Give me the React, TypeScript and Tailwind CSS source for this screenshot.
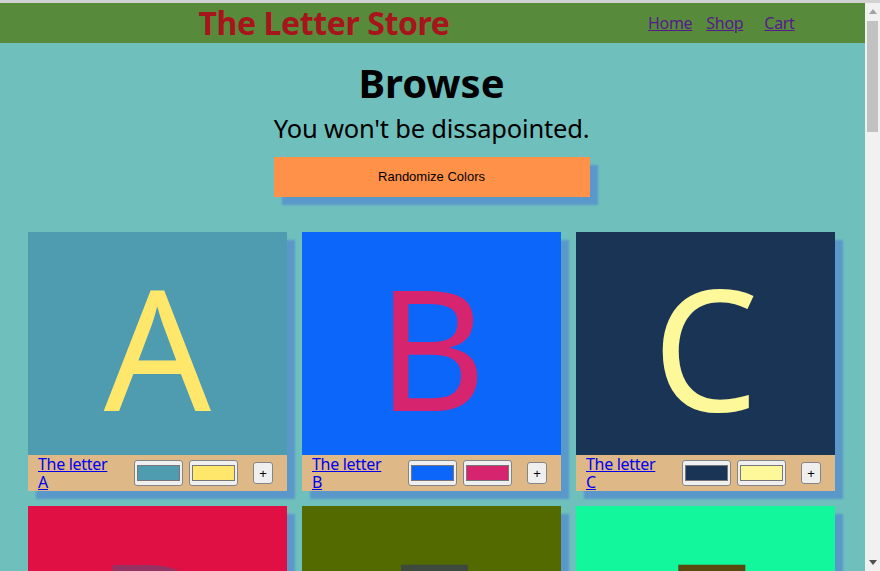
import React from "react";

type Card = { letter: string; bg: string; fg: string };

const cards: Card[] = [
  { letter: "A", bg: "#4f9bb0", fg: "#ffe76c" },
  { letter: "B", bg: "#0d66fa", fg: "#d6246e" },
  { letter: "C", bg: "#1a3456", fg: "#fdf99a" },
  { letter: "D", bg: "#e01045", fg: "#943363" },
  { letter: "E", bg: "#526a00", fg: "#3f4a3e" },
  { letter: "F", bg: "#12f79c", fg: "#5a4a10" },
];

function Swatch({ color }: { color: string }) {
  return (
    <div className="w-[49px] h-[26px] bg-[#efefef] border border-[#858585] rounded-[3px] px-[2px] py-[4px] flex">
      <div className="flex-1 border border-[#777777]" style={{ backgroundColor: color }} />
    </div>
  );
}

function LetterCard({ c }: { c: Card }) {
  return (
    <div className="flex flex-col w-[259px] shadow-[8px_8px_2px_#5b98ca]">
      <div
        className="h-[223px] flex items-center justify-center overflow-hidden"
        style={{ backgroundColor: c.bg }}
      >
        <span
          className="text-[168px] leading-[200px] font-['Noto_Sans',sans-serif] mt-[4px]"
          style={{ color: c.fg }}
        >
          {c.letter}
        </span>
      </div>
      <div className="h-[36px] bg-[#deb887] flex items-center pl-[10px]">
        <div className="w-[96px] flex">
          <a
            href="#"
            className="inline-block max-w-[78px] text-[16px] leading-[18px] text-[#0000ee] underline tracking-[-0.3px]"
          >
            The letter {c.letter}
          </a>
        </div>
        <div className="flex gap-[6px]">
          <Swatch color={c.bg} />
          <Swatch color={c.fg} />
        </div>
        <button className="ml-[15px] w-[20px] h-[22px] text-[13px] leading-none border border-[#858585] rounded-[3px] bg-[#efefef] text-black font-['Liberation_Sans',sans-serif]">
          +
        </button>
      </div>
    </div>
  );
}

function Scrollbar() {
  return (
    <div className="w-[15px] h-full bg-[#f1f1f1] flex flex-col items-center shrink-0">
      <div className="h-[17px] w-full flex items-center justify-center">
        <svg width="8" height="5" viewBox="0 0 8 5">
          <polygon points="0,5 8,5 4,0" fill="#a3a3a3" />
        </svg>
      </div>
      <div className="mt-[1px] w-[11px] h-[111px] bg-[#c1c1c1]" />
      <div className="flex-1" />
      <div className="h-[17px] w-full flex items-center justify-center">
        <svg width="8" height="5" viewBox="0 0 8 5">
          <polygon points="0,0 8,0 4,5" fill="#505050" />
        </svg>
      </div>
    </div>
  );
}

export default function App() {
  return (
    <div className="h-screen flex flex-col overflow-hidden font-['Noto_Sans',sans-serif]">
      <div className="h-[3px] bg-[#d2d2d2] shrink-0" />
      <div className="flex-1 flex min-h-0">
        <div className="flex-1 bg-[#6fbfbd] overflow-hidden">
          <header className="h-[40px] bg-[#578b3b] flex items-center">
            <div className="w-[648px] flex justify-center">
              <h1 className="text-[32px] font-bold text-[#a8141b] tracking-[-0.4px] leading-[40px]">
                The Letter Store
              </h1>
            </div>
            <nav className="flex items-center text-[16px] text-[#551a8b] tracking-[-0.3px]">
              <a href="#" className="underline">Home</a>
              <a href="#" className="underline ml-[14px]">Shop</a>
              <a href="#" className="underline ml-[21px]">Cart</a>
            </nav>
          </header>
          <main className="flex flex-col items-center pr-[2px]">
            <h2 className="mt-[14px] text-[40px] font-bold leading-[52px] text-black">Browse</h2>
            <p className="mt-[4px] text-[25.5px] leading-[30px] text-black tracking-[-0.2px]">
              You won't be dissapointed.
            </p>
            <button className="mt-[14px] w-[316px] h-[40px] bg-[#ff9148] shadow-[8px_8px_2px_#5b98ca] text-[13px] text-black font-['Liberation_Sans',sans-serif]">
              Randomize Colors
            </button>
            <div className="mt-[35px] grid grid-cols-[259px_259px_259px] gap-[15px] pb-[30px]">
              {cards.map((c) => (
                <LetterCard key={c.letter} c={c} />
              ))}
            </div>
          </main>
        </div>
        <Scrollbar />
      </div>
    </div>
  );
}
